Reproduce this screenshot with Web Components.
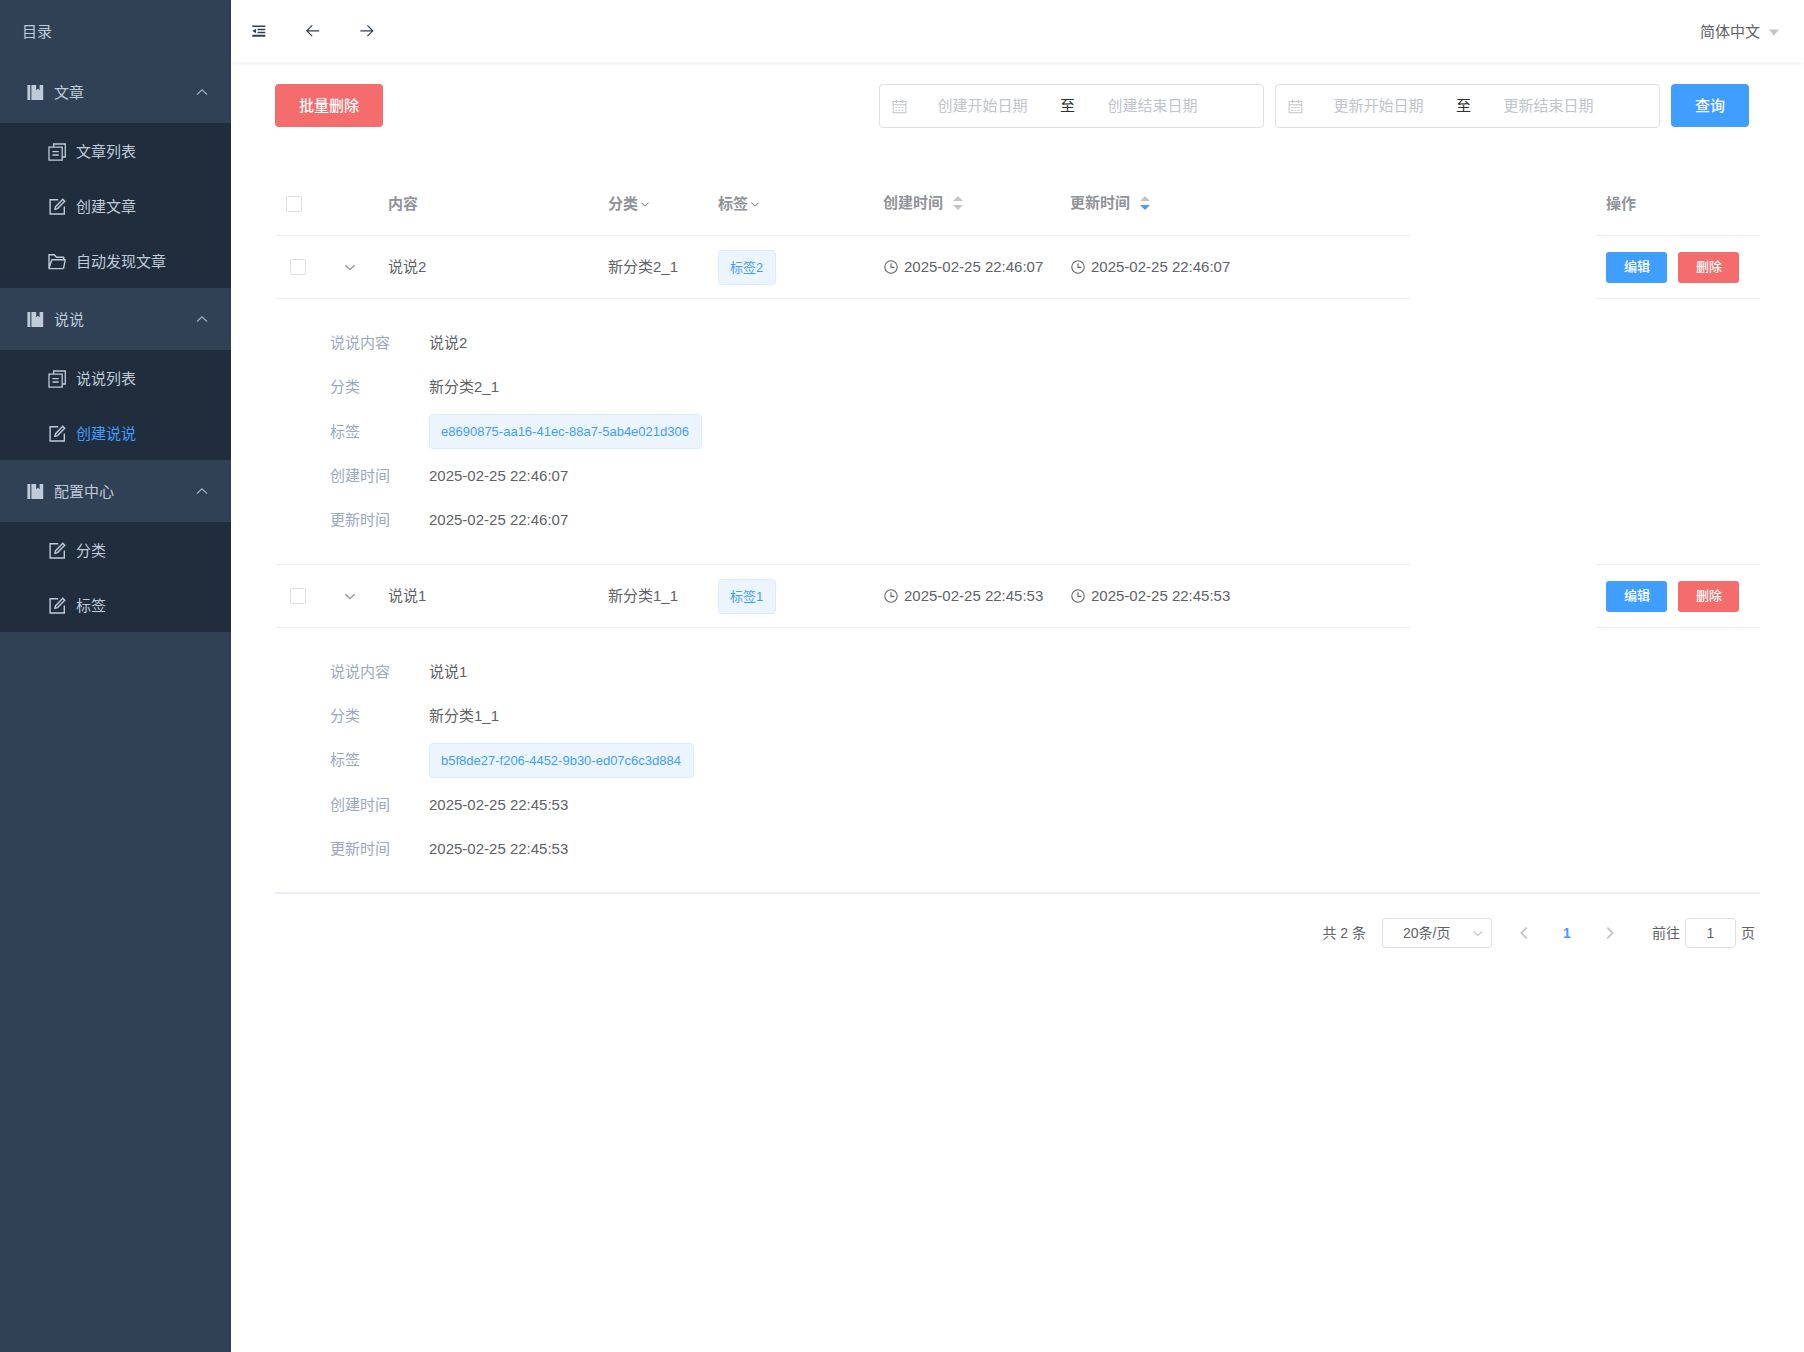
<!DOCTYPE html>
<html lang="zh-CN">
<head>
<meta charset="utf-8">
<title>目录</title>
<style>
  html, body { margin: 0; min-height: 100%; background: #fff; }
  body {
    font-family: "Liberation Sans", "Noto Sans CJK SC", sans-serif;
    font-size: 15px; line-height: 22px; color: #606266;
  }
</style>
</head>
<body>
<app-shell>
  <app-sidebar slot="side" heading="目录">
    <menu-group label="文章">
      <menu-entry icon="copy" label="文章列表"></menu-entry>
      <menu-entry icon="edit" label="创建文章"></menu-entry>
      <menu-entry icon="folder" label="自动发现文章"></menu-entry>
    </menu-group>
    <menu-group label="说说">
      <menu-entry icon="copy" label="说说列表"></menu-entry>
      <menu-entry icon="edit" label="创建说说" active></menu-entry>
    </menu-group>
    <menu-group label="配置中心">
      <menu-entry icon="edit" label="分类"></menu-entry>
      <menu-entry icon="edit" label="标签"></menu-entry>
    </menu-group>
  </app-sidebar>
  <app-topbar slot="top" language="简体中文"></app-topbar>
  <list-toolbar>
    <ui-button kind="danger">批量删除</ui-button>
    <date-range slot="filters" start="创建开始日期" end="创建结束日期"></date-range>
    <date-range slot="filters" start="更新开始日期" end="更新结束日期"></date-range>
    <ui-button slot="filters" kind="primary">查询</ui-button>
  </list-toolbar>
  <moment-table></moment-table>
  <list-pager></list-pager>
</app-shell>

<script>
const icons = {
  manage: `<path d="M1.4 1h2v15h-2zM3.4 1h.9v15h-.9z" /><path d="M5.4 1h4.8v5.2l1.7-1.5 1.7 1.5V1h3.6v15H5.4z"/>`,
  copy: `<g fill="none" stroke="currentColor" stroke-width="1.3"><path d="M1 4.2h13.2v12.9H1zM5.6 4V1h11.7v13h-3M4.4 8.6h6.4M4.4 12h6.4"/></g>`,
  edit: `<g fill="none" stroke="currentColor" stroke-width="1.4"><path d="M10.2 1.8H2.1v14.2h14.2V8.6"/><path d="M14.8 1.3l1.9 1.9-7.2 7.4-2.6.7.7-2.6z"/></g>`,
  folder: `<g fill="none" stroke="currentColor" stroke-width="1.4" stroke-linejoin="round"><path d="M15.2 15.6H1V1.8h5.4l2 2.5h7.4v2.5M1 15.2L3.8 6.8h13.4l-1.7 8.8"/></g>`,
  up: `<path fill="none" stroke="currentColor" stroke-width="1.2" d="M4 10.5L9 5.8l5 4.7"/>`,
  down: `<path fill="none" stroke="currentColor" stroke-width="1.3" d="M4.4 7.2l4.6 4.5 4.6-4.5"/>`,
  left: `<path fill="none" stroke="currentColor" stroke-width="2" d="M12 3L6 9l6 6"/>`,
  right: `<path fill="none" stroke="currentColor" stroke-width="2" d="M6 3l6 6-6 6"/>`,
  fold: `<path d="M2.3 3.4h13v1.7h-13zM7.6 6.7h7.7v1.5H7.6zM7.6 9.7h7.7v1.5H7.6zM2.3 12.8h13v1.9h-13zM2.3 9l3.8-2.2v4.4z"/>`,
  back: `<path fill="none" stroke="currentColor" stroke-width="1.2" d="M15.2 8.8H3M8.2 3.4L2.8 8.8l5.4 5.4"/>`,
  forward: `<path fill="none" stroke="currentColor" stroke-width="1.2" d="M2.4 8.8h12.2M9.4 3.4l5.4 5.4-5.4 5.4"/>`,
  caret: `<path d="M4 6.5h10l-5 6z"/>`,
  date: `<g fill="none" stroke="currentColor" stroke-width="1.1"><path d="M2.3 3.6h13.4v12.1H2.3zM2.3 7.2h13.4M5.8 1.8v3.4M12.2 1.8v3.4"/><path stroke-dasharray="2 1.3" d="M4.6 10h9M4.6 13h9"/></g>`,
  clock: `<g fill="none" stroke="currentColor" stroke-width="1.2"><circle cx="9" cy="9" r="7"/><path d="M9 4.8V9.4h3.8"/></g>`
};

const sheet = `
  :host { display: block; box-sizing: border-box; }
  *, *::before, *::after { box-sizing: border-box; }
  button, input, select { font: inherit; color: inherit; margin: 0; }
  button { cursor: pointer; }
`;

class Base extends HTMLElement {
  connectedCallback() {
    if (this.shadowRoot) return;
    this.attachShadow({ mode: "open" }).innerHTML =
      `<style>${sheet}${this.css()}</style>${this.html()}`;
  }
  css() { return ""; }
  html() { return "<slot></slot>"; }
  attr(name) { return this.getAttribute(name) || ""; }
}

class UiIcon extends Base {
  css() { return `:host { display: block; width: 18px; height: 18px; flex: none; }
    svg { display: block; width: 100%; height: 100%; fill: currentColor; }`; }
  html() { return `<svg viewBox="0 0 18 18" aria-hidden="true">${icons[this.attr("name")]}</svg>`; }
}

class AppShell extends Base {
  css() { return `
    :host { display: flex; min-height: 100vh; }
    .page { flex: 1; min-width: 0; display: flex; flex-direction: column; }
    main { padding: 22px 44px; }`; }
  html() { return `<slot name="side"></slot>
    <div class="page"><slot name="top"></slot><main><slot></slot></main></div>`; }
}

class AppSidebar extends Base {
  css() { return `
    :host { width: 231px; flex: none; background: #304156; color: #bfcbd9; }
    .heading { height: 61px; padding: 2px 22px 0; display: flex; align-items: center; }`; }
  html() { return `<div class="heading">${this.attr("heading")}</div><nav><slot></slot></nav>`; }
}

class MenuGroup extends Base {
  css() { return `
    button { width: 100%; height: 62px; padding: 2px 20px 0 26px; border: 0; background: none;
      display: flex; align-items: center; gap: 10px; text-align: left; }
    span { flex: 1; }
    .items { background: #1f2d3d; }
    .arrow { color: #a3afbd; }`; }
  html() { return `<button type="button" aria-expanded="true"><ui-icon name="manage"></ui-icon>
    <span>${this.attr("label")}</span><ui-icon class="arrow" name="up"></ui-icon></button>
    <div class="items"><slot></slot></div>`; }
}

class MenuEntry extends Base {
  css() { return `
    a { height: 55px; padding: 3px 22px 0 48px; display: flex; align-items: center; gap: 10px;
      color: inherit; text-decoration: none; }
    :host([active]) span { color: #409eff; }`; }
  html() { return `<a href="#"><ui-icon name="${this.attr("icon")}"></ui-icon><span>${this.attr("label")}</span></a>`; }
}

class AppTopbar extends Base {
  css() { return `
    :host { height: 62px; padding: 0 21px 0 19px; display: flex; align-items: center;
      justify-content: space-between; background: #fff; box-shadow: 0 1px 4px rgba(0,21,41,.08); }
    .tools { display: flex; gap: 36px; color: #303f50; }
    .tools button { width: 18px; height: 18px; padding: 0; border: 0; background: none; }
    .lang { padding: 2px 0 0; border: 0; background: none; display: flex; align-items: center; gap: 5px; }
    .lang ui-icon { color: #c0c4cc; }`; }
  html() { return `<div class="tools">
      <button type="button" aria-label="折叠"><ui-icon name="fold"></ui-icon></button>
      <button type="button" aria-label="后退"><ui-icon name="back"></ui-icon></button>
      <button type="button" aria-label="前进"><ui-icon name="forward"></ui-icon></button>
    </div>
    <button type="button" class="lang">${this.attr("language")}<ui-icon name="caret"></ui-icon></button>`; }
}

class UiButton extends Base {
  css() { return `
    :host { flex: none; }
    button { height: 43px; padding: 0 24px; border: 0; border-radius: 4px; color: #fff; font-weight: 500;
      display: block; white-space: nowrap; }
    :host([kind=primary]) button { background: #409eff; }
    :host([kind=danger]) button { background: #f56c6c; }
    :host([small]) button { height: 31px; padding: 0 17px 1px 18px; font-size: 13px; border-radius: 3px; }`; }
  html() { return `<button type="button"><slot></slot></button>`; }
}

class DateRange extends Base {
  css() { return `
    :host { width: 385px; height: 44px; padding: 0 40px 0 11px; display: flex; align-items: center;
      border: 1px solid #dcdfe6; border-radius: 4px; background: #fff; }
    ui-icon { width: 17px; height: 17px; margin-right: 4px; color: #c0c4cc; }
    input { flex: 1; width: 0; padding: 0; border: 0; outline: 0; background: none; text-align: center; }
    input::placeholder { color: #c0c4cc; opacity: 1; }
    span { width: 29px; text-align: center; color: #303133; }`; }
  html() { return `<ui-icon name="date"></ui-icon>
    <input type="text" aria-label="${this.attr("start")}" placeholder="${this.attr("start")}"><span>至</span>
    <input type="text" aria-label="${this.attr("end")}" placeholder="${this.attr("end")}">`; }
}

class ListToolbar extends Base {
  css() { return `
    :host { display: flex; justify-content: space-between; margin-bottom: 45px; padding-right: 11px; }
    .filters { display: flex; gap: 11px; }`; }
  html() { return `<slot></slot><div class="filters"><slot name="filters"></slot></div>`; }
}

class UiTag extends Base {
  css() { return `
    :host { display: inline-block; height: 35px; line-height: 33px; padding: 0 12px 0 11px; font-size: 13px;
      color: #409eff; background: #ecf5ff; border: 1px solid #d9ecff; border-radius: 4px;
      white-space: nowrap; vertical-align: middle; }`; }
}

class MomentTable extends Base {
  css() { return `
    :host { border-bottom: 2px solid #ebeef5; }
    table { width: 100%; border-collapse: separate; border-spacing: 0; table-layout: fixed; }
    th, td { height: 63px; padding: 0 11px; border-bottom: 1px solid #ebeef5; text-align: left; vertical-align: middle; }
    th { color: #909399; font-weight: 700; }
    td:nth-child(1) { padding-left: 15px; }
    .gap { border-bottom: 0; }
    .line { display: flex; align-items: center; }
    .sortable { padding-bottom: 2px; }
    .time { gap: 5px; white-space: nowrap; }
    .time ui-icon { width: 16px; height: 16px; }
    .filter { width: 14px; height: 14px; }
    input { appearance: none; display: block; width: 16px; height: 16px; border: 1px solid #dcdfe6; border-radius: 2px; background: #fff; }
    .toggle { display: block; margin: 0 auto; width: 18px; height: 18px; padding: 0; border: 0; background: none; color: #909399; }
    td:nth-child(2) { padding-left: 9px; }
    .sort { display: flex; flex-direction: column; gap: 4px; margin-left: 10px; }
    .sort i { border: 5px solid transparent; border-bottom-color: #c0c4cc; border-top-width: 0; }
    .sort i + i { border-bottom-width: 0; border-top: 5px solid #c0c4cc; }
    .sort.desc i + i { border-top-color: #409eff; }
    .actions { display: flex; gap: 11px; }
    tr.detail td { height: 266px; padding: 0; }
    tr.detail td.wide { padding: 0 55px; }
    tr.detail:last-child td { height: 264px; border-bottom: 0; }
    dl { margin: 0; display: grid; grid-template-columns: 99px 1fr; grid-template-rows: 44px 44px 45px 44px 44px; align-items: center; }
    dt { color: #99a9bf; }
    dd { margin: 0; }`; }
  row(r) { return `
    <tr><td><input type="checkbox" aria-label="选择${r.text}"></td>
      <td><button type="button" class="toggle" aria-label="展开"><ui-icon name="down"></ui-icon></button></td>
      <td>${r.text}</td><td>${r.type}</td><td><ui-tag>${r.tag}</ui-tag></td>
      <td><div class="line time"><ui-icon name="clock"></ui-icon>${r.time}</div></td>
      <td><div class="line time"><ui-icon name="clock"></ui-icon>${r.time}</div></td>
      <td class="gap"></td>
      <td><div class="actions"><ui-button small kind="primary">编辑</ui-button><ui-button small kind="danger">删除</ui-button></div></td></tr>
    <tr class="detail"><td class="wide" colspan="7"><dl>
      <dt>说说内容</dt><dd>${r.text}</dd><dt>分类</dt><dd>${r.type}</dd>
      <dt>标签</dt><dd><ui-tag>${r.id}</ui-tag></dd>
      <dt>创建时间</dt><dd>${r.time}</dd><dt>更新时间</dt><dd>${r.time}</dd></dl></td>
      <td class="gap"></td><td></td></tr>`; }
  html() {
    const rows = [
      { text: "说说2", type: "新分类2_1", tag: "标签2", id: "e8690875-aa16-41ec-88a7-5ab4e021d306", time: "2025-02-25 22:46:07" },
      { text: "说说1", type: "新分类1_1", tag: "标签1", id: "b5f8de27-f206-4452-9b30-ed07c6c3d884", time: "2025-02-25 22:45:53" }
    ];
    const widths = [50, 52, 220, 110, 165, 187, 351, 0, 165];
    return `<table><colgroup>${widths.map(w => w ? `<col style="width:${w}px">` : "<col>").join("")}</colgroup>
      <thead><tr><th><input type="checkbox" aria-label="全选"></th><th></th><th>内容</th>
      <th><div class="line">分类<ui-icon class="filter" name="down"></ui-icon></div></th>
      <th><div class="line">标签<ui-icon class="filter" name="down"></ui-icon></div></th>
      <th><div class="line sortable">创建时间<span class="sort"><i></i><i></i></span></div></th>
      <th><div class="line sortable">更新时间<span class="sort desc"><i></i><i></i></span></div></th>
      <th class="gap"></th><th>操作</th></tr></thead>
      <tbody>${rows.map(r => this.row(r)).join("")}</tbody></table>`;
  }
}

class ListPager extends Base {
  css() { return `
    :host { display: flex; justify-content: flex-end; align-items: center; padding: 24px 5px 0; font-size: 14px; line-height: 20px; }
    .size { display: grid; width: 110px; margin: 0 16px; align-items: center; }
    .size > * { grid-area: 1 / 1; }
    select { appearance: none; width: 110px; height: 30px; padding: 0 20px; border: 1px solid #dcdfe6; border-radius: 3px; background: #fff; }
    .size ui-icon { width: 16px; height: 16px; justify-self: end; margin-right: 6px; color: #c0c4cc; pointer-events: none; }
    button { width: 32px; height: 30px; padding: 0; border: 0; background: none; display: flex; align-items: center; justify-content: center; }
    button ui-icon { width: 16px; height: 16px; color: #c0c4cc; }
    .pages { display: flex; gap: 11px; margin-right: 26px; }
    .pages .on { color: #409eff; font-weight: 700; }
    label { display: flex; align-items: center; gap: 5px; }
    input { width: 51px; height: 30px; padding: 0 3px; border: 1px solid #dcdfe6; border-radius: 4px; text-align: center; }`; }
  html() { return `<span>共 2 条</span>
    <span class="size"><select aria-label="每页条数"><option>20条/页</option></select><ui-icon name="down"></ui-icon></span>
    <div class="pages"><button type="button" aria-label="上一页"><ui-icon name="left"></ui-icon></button>
      <button type="button" class="on">1</button>
      <button type="button" aria-label="下一页"><ui-icon name="right"></ui-icon></button></div>
    <label>前往<input type="text" value="1">页</label>`; }
}

Object.entries({
  "ui-icon": UiIcon, "ui-button": UiButton, "ui-tag": UiTag, "date-range": DateRange,
  "menu-entry": MenuEntry, "menu-group": MenuGroup, "app-sidebar": AppSidebar, "app-topbar": AppTopbar,
  "list-toolbar": ListToolbar, "moment-table": MomentTable, "list-pager": ListPager, "app-shell": AppShell
}).forEach(([name, cls]) => customElements.define(name, cls));
</script>
</body>
</html>
